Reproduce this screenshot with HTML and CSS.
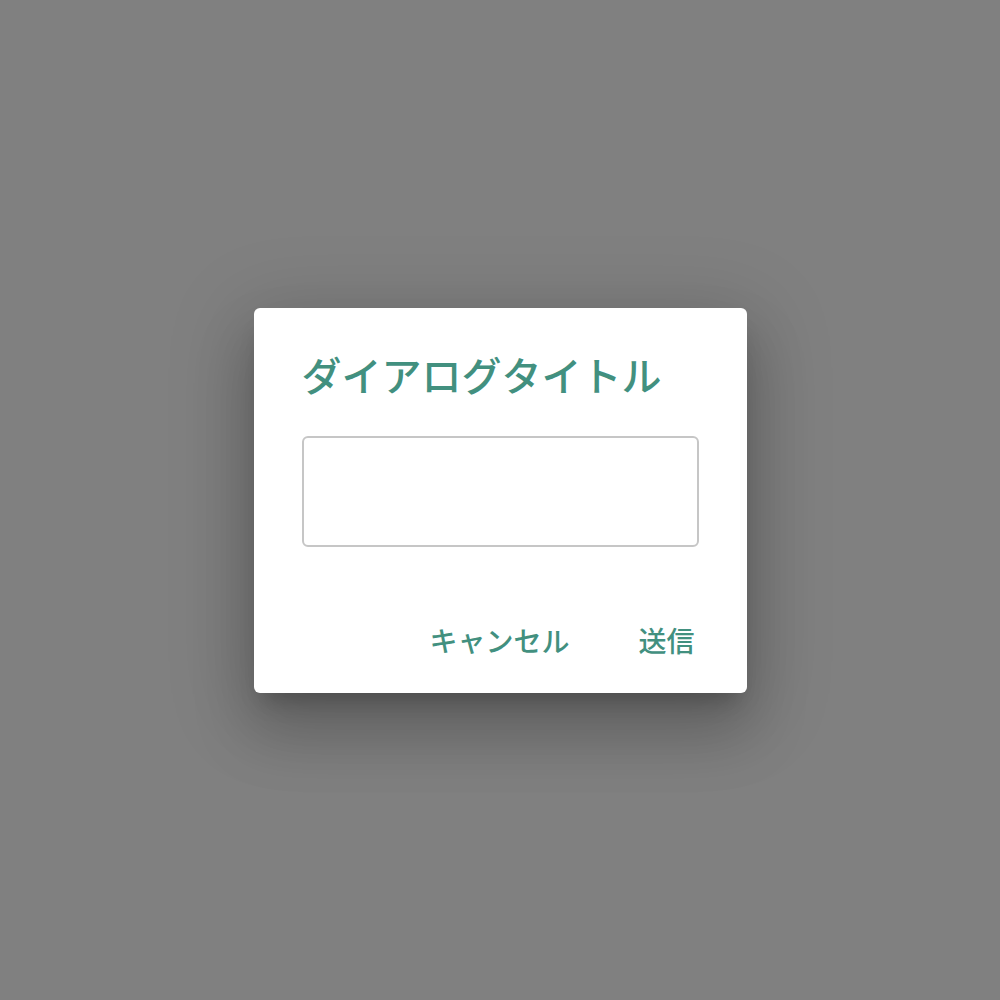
FILE: index.html
```html
<!DOCTYPE html>
<html lang="ja">
<head>
<meta charset="utf-8">
<link rel="stylesheet" href="styles.css">
</head>
<body>
<div class="backdrop">
  <div class="dialog">
    <h1 class="title">ダイアログタイトル</h1>
    <textarea class="field"></textarea>
    <div class="actions">
      <button class="btn">キャンセル</button>
      <button class="btn">送信</button>
    </div>
  </div>
</div>
</body>
</html>
```
FILE: styles.css
```css
html, body {
  margin: 0;
  padding: 0;
}
body {
  background: #808080;
  font-family: "Noto Sans CJK JP", "Noto Sans", sans-serif;
}
.backdrop {
  width: 1000px;
  height: 1000px;
  display: flex;
  align-items: center;
  justify-content: center;
}
.dialog {
  width: 493px;
  height: 385px;
  box-sizing: border-box;
  background: #fff;
  border-radius: 6px;
  padding: 36px 49px 0 48px;
  display: flex;
  flex-direction: column;
  box-shadow: 0 38px 60px 5px rgba(0,0,0,.16), 0 14px 80px 14px rgba(0,0,0,.14), 0 16px 22px -10px rgba(0,0,0,.22);
}
.title {
  margin: 0;
  font-size: 40px;
  line-height: 60px;
  font-weight: 500;
  color: #42907f;
}
.field {
  margin-top: 32px;
  width: 397px;
  height: 111px;
  box-sizing: border-box;
  border: 2px solid #c6c6c6;
  border-radius: 6px;
  resize: none;
  outline: none;
}
.actions {
  display: flex;
  justify-content: flex-end;
  gap: 69px;
  margin-top: 73px;
  margin-right: 3px;
}
.btn {
  border: none;
  background: none;
  padding: 0;
  font-family: inherit;
  font-size: 28px;
  line-height: 40px;
  font-weight: 500;
  color: #42907f;
}
```
